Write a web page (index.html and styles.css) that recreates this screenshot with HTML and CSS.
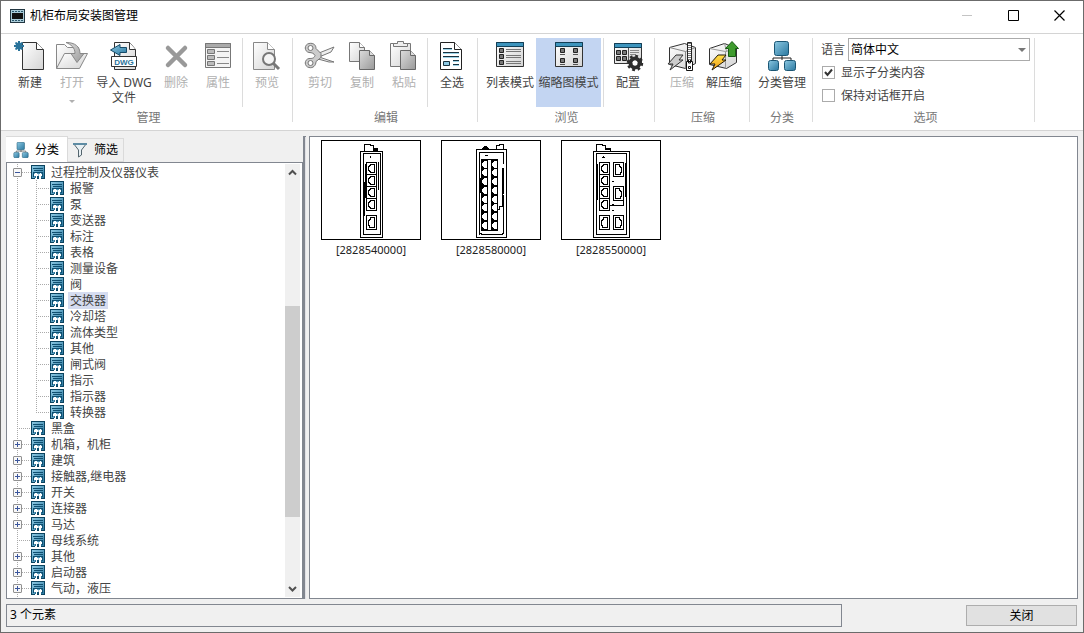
FILE: index.html
```html
<!DOCTYPE html>
<html lang="zh-CN">
<head>
<meta charset="utf-8">
<meta name="viewport" content="width=device-width, initial-scale=1">
<title>机柜布局安装图管理</title>
<link rel="stylesheet" href="styles.css">
</head>
<body>
<svg class="defs" aria-hidden="true">
  <defs>
    <linearGradient id="paper" x1="0" y1="0" x2="1" y2="1"><stop offset="0" stop-color="#fff"/><stop offset="1" stop-color="#d4d4d4"/></linearGradient>
    <linearGradient id="grey" x1="0" y1="0" x2="1" y2="1"><stop offset="0" stop-color="#dcdcdc"/><stop offset="1" stop-color="#999"/></linearGradient>
    <linearGradient id="blue" x1="0" y1="0" x2="1" y2="1"><stop offset="0" stop-color="#8cc8e2"/><stop offset="1" stop-color="#2a78a0"/></linearGradient>
    <linearGradient id="bolt" x1="0" y1="0" x2="0" y2="1"><stop offset="0" stop-color="#ffe14a"/><stop offset="1" stop-color="#f29a12"/></linearGradient>
    <symbol id="cat" viewBox="0 0 14 14">
      <path d="M0 0h14v14H0z" fill="#0b435f"/>
      <path d="M1 1h12v12H1z" fill="url(#blue)"/>
      <path d="M2 3h10v1H2zM3 5h9v1H3zM2 7h10v1H2zM2 8h1v4H2zM11 8h1v4h-1z" fill="#0f4f70"/>
      <path d="M4 8h2v1h1v2H6v3H4v-3H3V9h1zM9 8h1v1h1v2h-1v3H8v-3H7.500V9H9z" fill="#fff"/>
      <path d="M6 11h2v2H6z" fill="#0f4f70"/>
      <path d="M4 11h1v2H4zM10 11h1v2h-1z" fill="#2a6f92"/>
    </symbol>
    <symbol id="org" viewBox="0 0 28 30">
      <path d="M14 14v5M5 19v-2h18v2" fill="none" stroke="#222" stroke-width="1"/>
      <g fill="url(#blue)" stroke="#1b5674"><rect x="6.500" y=".5" width="14" height="14" rx="2"/><rect x=".5" y="19.500" width="10" height="10" rx="2"/><rect x="16.500" y="19.500" width="11" height="10" rx="2"/></g>
    </symbol>
    <symbol id="port" viewBox="0 0 11 13">
      <path d="M.5.500h10v12H.5z" fill="#fff" stroke="#000"/>
      <path d="M4.500 2.500h4v8h-4v-1h-1v-1h-1v-4h1v-1h1z" fill="none" stroke="#000"/>
    </symbol>
    <symbol id="port-b" viewBox="0 0 11 15">
      <path d="M.5.500h10v14H.5z" fill="#fff" stroke="#000"/>
      <path d="M4.500 2.500h4v10h-5v-2h-1v-5h1v-1h1z" fill="none" stroke="#000"/>
    </symbol>
    <symbol id="port-s" viewBox="0 0 7 9">
      <path d="M0 0h7v9H0z"/>
      <path d="M3 1h3v7H3V7H2V6H1V3h1V2h1z" fill="#fff"/>
    </symbol>
  </defs>
</svg>

<div class="window">
  <header class="titlebar">
    <svg class="app-icon" viewBox="0 0 15 14" aria-hidden="true"><path d="M0 0h15v14H0z" fill="#223641"/><path d="M1 1h13v12H1z" fill="#a9cbd8"/><path d="M2 4h11v6H2z" fill="#111"/><path d="M2 2h2v1H2zM5 2h2v1H5zM8 2h2v1H8zM11 2h2v1h-2zM2 11h2v1H2zM5 11h2v1H5zM8 11h2v1H8zM11 11h2v1h-2z" fill="#29566b"/></svg>
    <h1>机柜布局安装图管理</h1>
    <div class="win-buttons">
      <button aria-label="最小化" disabled><svg viewBox="0 0 11 11"><path d="M0 5.500h10" stroke="#c4c4c4"/></svg></button>
      <button aria-label="最大化"><svg viewBox="0 0 11 11"><path d="M.5.500h10v10H.5z" fill="none" stroke="#000"/></svg></button>
      <button aria-label="关闭窗口"><svg viewBox="0 0 11 11"><path d="M.5.500l10 10M10.500.5l-10 10" stroke="#000" stroke-width="1.200"/></svg></button>
    </div>
  </header>

  <div class="ribbon">
    <section class="group first">
      <div class="tools">
        <button class="tool"><svg viewBox="0 0 32 32"><path d="M8.500 2.500h14l7 7v20h-21z" fill="url(#paper)" stroke="#333"/><path d="M22.500 2.500v7h7" fill="#fff" stroke="#333"/><path d="M4 1h2v2l2-1 1 1-1 2h2v2H8l1 2-1 1-2-1v2H4V9l-2 1-1-1 1-2H0V5h2L1 3l1-1 2 1z" fill="#2a749b"/></svg>新建</button>
        <button class="tool" disabled><svg viewBox="0 0 32 32"><path d="M.5 28.500v-24h8l3 3h11v6" fill="url(#paper)" stroke="#888"/><path d="M.5 28.500l8-15h23l-8 15z" fill="url(#paper)" stroke="#888"/><path d="M10 2.500c9 0 14 4 14 11h4l-7 9-6-9h4c0-6-4-9-9-11z" fill="url(#grey)" stroke="#888"/></svg>打开<span class="caret"></span></button>
        <button class="tool dwg"><svg viewBox="0 0 32 32"><path d="M6.500 29.500v-27h15l6 7v20z" fill="url(#paper)" stroke="#333"/><path d="M21.500 2.500v7h6" fill="#fff" stroke="#333"/><path d="M12 4.500v3h6.500v5H12v3L2.500 10z" fill="url(#blue)" stroke="#164b68"/><path d="M3.500 16.500h25v10h-25z" fill="#fff" stroke="#333"/><text x="16" y="25" text-anchor="middle" class="dwg-mark">DWG</text></svg><span>导入 DWG<br>文件</span></button>
        <button class="tool" disabled><svg viewBox="0 0 32 32"><path d="M8 8l17 17M25 8L8 25" stroke="#999" stroke-width="4.500" stroke-linecap="round"/></svg>删除</button>
        <button class="tool" disabled><svg viewBox="0 0 32 32"><path d="M3.500 3.500h25v24h-25z" fill="#f4f4f4" stroke="#777"/><path d="M3.500 3.500h25v4h-25z" fill="#aaa" stroke="#777"/><g fill="#bbb" stroke="#777"><path d="M5.500 9.500h7v4h-7zM5.500 15.500h7v4h-7zM5.500 21.500h7v4h-7z"/></g><path d="M15 11.500h12M15 17.500h12M15 23.500h12" stroke="#888"/></svg>属性</button>
        <span class="sep"></span>
        <button class="tool" disabled><svg viewBox="0 0 32 32"><path d="M2.500 2.500h14l7 7v20h-21z" fill="url(#paper)" stroke="#888"/><path d="M16.500 2.500v7h7" fill="#fff" stroke="#888"/><path d="M22 23l6 6" stroke="#777" stroke-width="3"/><circle cx="18" cy="19" r="6" fill="#f4f4f4" stroke="#777" stroke-width="2"/></svg>预览</button>
      </div>
      <h2>管理</h2>
    </section>
    <section class="group">
      <div class="tools">
        <button class="tool" disabled><svg viewBox="0 0 32 32"><path d="M15 13l15-6-3 5-12 5zM15 17l15 5-5 0-11-3z" fill="#eee" stroke="#777"/><g fill="#ccc" stroke="#777"><path d="M5 3.500c5-1 7 2 7 5l5 5v4l-5 4c0 4-3 7-7 6-5-1-5-8 0-9 3 0 5 0 6-3-1-2-3-3-6-3-5-1-5-8 0-9z"/></g><circle cx="6.500" cy="8" r="2.500" fill="#fff" stroke="#777"/><circle cx="6.500" cy="23" r="2.500" fill="#fff" stroke="#777"/></svg>剪切</button>
        <button class="tool" disabled><svg viewBox="0 0 32 32"><path d="M3.500 2.500h10l5 5v14h-15z" fill="url(#paper)" stroke="#777"/><path d="M13.500 2.500v5h5" fill="#fff" stroke="#777"/><path d="M13.500 10.500h10l5 5v14h-15z" fill="url(#grey)" stroke="#666"/><path d="M23.500 10.500v5h5" fill="#ddd" stroke="#666"/></svg>复制</button>
        <button class="tool" disabled><svg viewBox="0 0 32 32"><path d="M2.500 3.500h20v23h-20z" fill="url(#paper)" stroke="#777"/><path d="M5.500 6.500v-3h4v-2h6v2h4v3z" fill="#eee" stroke="#777"/><path d="M12.500 10.500h10l5 5v14h-15z" fill="url(#grey)" stroke="#666"/><path d="M22.500 10.500v5h5" fill="#ddd" stroke="#666"/></svg>粘贴</button>
        <span class="sep"></span>
        <button class="tool"><svg viewBox="0 0 32 32"><path d="M4.500 2.500h14l7 7v20h-21z" fill="#fff" stroke="#222"/><path d="M18.500 2.500v7h7" fill="#fff" stroke="#222"/><path d="M7 8.500h9M7 12.500h16M7 16.500h16M17 20.500h6M17 24.500h6" stroke="#19323f"/><path d="M7 9.500h9M7 13.500h16M7 17.500h16M17 21.500h6M17 25.500h6" stroke="#9bd3e8"/><path d="M7.500 21.500h6v4h-6z" fill="#8cc8e2" stroke="#19323f"/></svg>全选</button>
      </div>
      <h2>编辑</h2>
    </section>
    <section class="group browse">
      <div class="tools">
        <button class="tool wide"><svg viewBox="0 0 32 32"><path d="M2.500 2.500h27v24h-27z" fill="url(#paper)" stroke="#333"/><path d="M2.500 2.500h27v4h-27z" fill="#3d94bd" stroke="#123f57"/><g fill="#777" stroke="#222"><path d="M5.500 8.500h4v4h-4zM5.500 14.500h4v4h-4zM5.500 20.500h4v4h-4z"/></g><path d="M12 9.500h15M12 11.500h15M12 15.500h15M12 17.500h15M12 21.500h15M12 23.500h15" stroke="#777"/></svg>列表模式</button>
        <button class="tool thumb-mode" aria-pressed="true"><svg viewBox="0 0 32 32"><path d="M2.500 2.500h27v24h-27z" fill="url(#paper)" stroke="#333"/><path d="M2.500 2.500h27v4h-27z" fill="#3d94bd" stroke="#123f57"/><g fill="#777" stroke="#222"><path d="M7.500 8.500h4v4h-4zM20.500 8.500h4v4h-4zM7.500 18.500h4v4h-4zM20.500 18.500h4v4h-4z"/></g><path d="M7 14.500h5M20 14.500h5M7 24.500h5M20 24.500h5" stroke="#555"/></svg>缩略图模式</button>
        <span class="sep snug"></span>
        <button class="tool"><svg viewBox="0 0 32 32"><path d="M2.500 3.500h27v20h-27z" fill="url(#paper)" stroke="#333"/><path d="M2.500 3.500h27v4h-27z" fill="#3d94bd" stroke="#123f57"/><g fill="#777" stroke="#222"><path d="M4.500 10.500h4v4h-4zM10.500 10.500h4v4h-4zM4.500 16.500h4v4h-4zM10.500 16.500h4v4h-4z"/></g><path d="M18 10.500h9M18 12.500h9M18 14.500h6" stroke="#888"/><path d="M16.500 8v15" stroke="#555"/><circle cx="23" cy="23" r="4.500" fill="none" stroke="#2e2e2e" stroke-width="4"/><circle cx="23" cy="23" r="7" fill="none" stroke="#2e2e2e" stroke-width="2.500" stroke-dasharray="2.750 2.750"/><circle cx="23" cy="23" r="2.500" fill="#fff"/></svg>配置</button>
      </div>
      <h2>浏览</h2>
    </section>
    <section class="group">
      <div class="tools">
        <button class="tool" disabled><svg viewBox="0 0 32 32"><path d="M3.500 7.500l15-4 11 4v16l-10 5-16-4z" fill="url(#paper)" stroke="#333"/><path d="M3.500 7.500l16 4 10-4M19.500 11.500v17" fill="none" stroke="#888"/><path d="M10 15h7l-4 5h4L4 30l3-6H2z" fill="#ccc" stroke="#333"/><path d="M21.500 2.500h4v19h-4z" fill="#fff" stroke="#222"/><path d="M23.500 3v18" stroke="#777" stroke-width="3" stroke-dasharray="1 1"/><path d="M20.500 21.500h6v9h-6z" fill="#fff" stroke="#111"/><path d="M22.500 26.500h2v2h-2zM22.500 20v3h2v-3" fill="none" stroke="#111"/></svg>压缩</button>
        <button class="tool"><svg viewBox="0 0 32 32"><path d="M1.500 8.500l15-5 12 5v14l-10 6-17-4z" fill="url(#paper)" stroke="#333"/><path d="M1.500 8.500l16 3 11-3M17.500 11.500v17M16.500 3.500l2 8" fill="none" stroke="#999"/><path d="M10 15h8l-4 5h4L4 30l3-6H2z" fill="url(#bolt)" stroke="#221a08"/><path d="M24 1.500l6.500 7h-3v8h-7v-8h-3z" fill="#3f9b2e" stroke="#175c12"/></svg>解压缩</button>
      </div>
      <h2>压缩</h2>
    </section>
    <section class="group">
      <div class="tools">
        <button class="tool wide"><svg viewBox="0 0 32 32"><use href="#org" x="2" y="1" width="28" height="30"/></svg>分类管理</button>
      </div>
      <h2>分类</h2>
    </section>
    <section class="group options">
      <div class="fields">
        <div class="field"><label for="lang">语言</label><select id="lang"><option>简体中文</option></select></div>
        <label class="check"><input type="checkbox" checked>显示子分类内容</label>
        <label class="check"><input type="checkbox">保持对话框开启</label>
      </div>
      <h2>选项</h2>
    </section>
  </div>

  <main class="workspace">
    <aside class="sidebar">
      <div class="tabs" role="tablist">
        <button class="tab" role="tab" aria-selected="true"><svg viewBox="0 0 16 16"><use href="#org" width="16" height="16"/></svg>分类</button>
        <button class="tab" role="tab" aria-selected="false"><svg viewBox="0 0 16 16"><path d="M1.500 1.500h13L9.500 8v5L6.500 15V8z" fill="#e8f0f4" stroke="#53646d"/><path d="M1 1h14v2H1z" fill="#5d8ba3"/></svg>筛选</button>
      </div>
      <div class="tree-box">
        <ul class="tree">
          <li><div class="row"><button class="toggle open" aria-label="折叠"></button><i></i><svg><use href="#cat"/></svg><span>过程控制及仪器仪表</span></div>
            <ul class="branch">
              <li class="row"><i></i><svg><use href="#cat"/></svg><span>报警</span></li>
              <li class="row"><i></i><svg><use href="#cat"/></svg><span>泵</span></li>
              <li class="row"><i></i><svg><use href="#cat"/></svg><span>变送器</span></li>
              <li class="row"><i></i><svg><use href="#cat"/></svg><span>标注</span></li>
              <li class="row"><i></i><svg><use href="#cat"/></svg><span>表格</span></li>
              <li class="row"><i></i><svg><use href="#cat"/></svg><span>测量设备</span></li>
              <li class="row"><i></i><svg><use href="#cat"/></svg><span>阀</span></li>
              <li class="row selected"><i></i><svg><use href="#cat"/></svg><span>交换器</span></li>
              <li class="row"><i></i><svg><use href="#cat"/></svg><span>冷却塔</span></li>
              <li class="row"><i></i><svg><use href="#cat"/></svg><span>流体类型</span></li>
              <li class="row"><i></i><svg><use href="#cat"/></svg><span>其他</span></li>
              <li class="row"><i></i><svg><use href="#cat"/></svg><span>闸式阀</span></li>
              <li class="row"><i></i><svg><use href="#cat"/></svg><span>指示</span></li>
              <li class="row"><i></i><svg><use href="#cat"/></svg><span>指示器</span></li>
              <li class="row"><i></i><svg><use href="#cat"/></svg><span>转换器</span></li>
            </ul>
          </li>
          <li class="row leaf"><i></i><svg><use href="#cat"/></svg><span>黑盒</span></li>
          <li class="row"><button class="toggle" aria-label="展开"></button><i></i><svg><use href="#cat"/></svg><span>机箱，机柜</span></li>
          <li class="row"><button class="toggle" aria-label="展开"></button><i></i><svg><use href="#cat"/></svg><span>建筑</span></li>
          <li class="row"><button class="toggle" aria-label="展开"></button><i></i><svg><use href="#cat"/></svg><span>接触器,继电器</span></li>
          <li class="row"><button class="toggle" aria-label="展开"></button><i></i><svg><use href="#cat"/></svg><span>开关</span></li>
          <li class="row"><button class="toggle" aria-label="展开"></button><i></i><svg><use href="#cat"/></svg><span>连接器</span></li>
          <li class="row"><button class="toggle" aria-label="展开"></button><i></i><svg><use href="#cat"/></svg><span>马达</span></li>
          <li class="row leaf"><i></i><svg><use href="#cat"/></svg><span>母线系统</span></li>
          <li class="row"><button class="toggle" aria-label="展开"></button><i></i><svg><use href="#cat"/></svg><span>其他</span></li>
          <li class="row"><button class="toggle" aria-label="展开"></button><i></i><svg><use href="#cat"/></svg><span>启动器</span></li>
          <li class="row"><button class="toggle" aria-label="展开"></button><i></i><svg><use href="#cat"/></svg><span>气动，液压</span></li>
        </ul>
        <div class="scrollbar" aria-hidden="true">
          <svg viewBox="0 0 15 17"><path d="M4 10.500l3.500-3.500 3.500 3.500" fill="none" stroke="#505050" stroke-width="2"/></svg>
          <div class="track"><div class="before"></div><div class="thumb"></div><div class="after"></div></div>
          <svg viewBox="0 0 15 17"><path d="M4 7l3.500 3.500L11 7" fill="none" stroke="#505050" stroke-width="2"/></svg>
        </div>
      </div>
    </aside>
    <div class="splitter"></div>
    <section class="gallery">
      <figure>
        <svg viewBox="0 0 100 100" shape-rendering="crispEdges" role="img" aria-label="交换机 2828540000">
          <g fill="none" stroke="#000"><path d="M39.500 11.500h22v86h-22zM42.500 13.500h17v81h-17zM43.500 11v-7h5l1 1h3v4h3v2M52 8.500h4v2h-4M49.500 16v2M57.500 22v28M44.500 24v34M43.500 42v34"/></g>
          <use href="#port" x="45" y="22" width="11" height="13"/><use href="#port" x="45" y="34" width="11" height="13"/><use href="#port" x="45" y="46" width="11" height="13"/><use href="#port" x="45" y="58" width="11" height="13"/><use href="#port-b" x="45" y="75" width="11" height="15"/>
        </svg>
        <figcaption>[2828540000]</figcaption>
      </figure>
      <figure>
        <svg viewBox="0 0 100 100" shape-rendering="crispEdges" role="img" aria-label="交换机 2828580000">
          <path d="M41 9V8h1V7h1V6h3v1h1v1h1v1z"/>
          <g fill="none" stroke="#000"><path d="M35.500 9.500h30v88h-30zM38.500 94.500v-82h23M62.500 12v12M38 93.500h2v1h21v-1h1v-39M62.500 28v26M61.500 28v38h-3v3h-2M55.500 9v-4h3v-1h4v5M44 15.500h3M40.500 19.500h16v71h-16zM39.500 38v15"/></g>
          <use href="#port-s" x="40" y="20" width="7" height="9"/><use href="#port-s" x="40" y="28" width="7" height="9"/><use href="#port-s" x="40" y="37" width="7" height="9"/><use href="#port-s" x="40" y="46" width="7" height="9"/><use href="#port-s" x="40" y="55" width="7" height="9"/><use href="#port-s" x="40" y="63" width="7" height="9"/><use href="#port-s" x="40" y="72" width="7" height="9"/><use href="#port-s" x="40" y="81" width="7" height="9"/>
          <use href="#port-s" x="50" y="20" width="7" height="9"/><use href="#port-s" x="50" y="28" width="7" height="9"/><use href="#port-s" x="50" y="37" width="7" height="9"/><use href="#port-s" x="50" y="46" width="7" height="9"/><use href="#port-s" x="50" y="55" width="7" height="9"/><use href="#port-s" x="50" y="63" width="7" height="9"/><use href="#port-s" x="50" y="72" width="7" height="9"/><use href="#port-s" x="50" y="81" width="7" height="9"/>
        </svg>
        <figcaption>[2828580000]</figcaption>
      </figure>
      <figure>
        <svg viewBox="0 0 100 100" shape-rendering="crispEdges" role="img" aria-label="交换机 2828550000">
          <g fill="none" stroke="#000"><path d="M32.500 11.500h36v86h-36zM35.500 13.500h30v81h-30zM35.500 11v-7h5l1 1h3v4h5v2M44 8.500h5v2M41 17.500h3M42.500 16v2M36.500 24v36M64.500 23v34M51 41.500h2M51 64.500h2M51 70.500h2M48 65.500h14v-5"/></g>
          <use href="#port" x="38" y="22" width="11" height="13"/><use href="#port" x="38" y="34" width="11" height="13"/><use href="#port" x="38" y="46" width="11" height="13"/><use href="#port" x="38" y="58" width="11" height="13"/><use href="#port-b" x="38" y="75" width="11" height="15"/>
          <g transform="translate(115 0) scale(-1 1)"><use href="#port-b" x="52" y="22" width="11" height="15"/><use href="#port-b" x="52" y="46" width="11" height="15"/><use href="#port-b" x="52" y="75" width="11" height="15"/></g>
        </svg>
        <figcaption>[2828550000]</figcaption>
      </figure>
    </section>
  </main>

  <footer class="statusbar">
    <output>3 个元素</output>
    <button class="close">关闭</button>
  </footer>
</div>
</body>
</html>
```
FILE: styles.css
```css
* { box-sizing: border-box; }

body {
  margin: 0;
  font: 12px/16px "Noto Sans", "Noto Sans CJK SC", sans-serif;
  color: #444;
}

button, select, input { font: inherit; color: inherit; margin: 0; }
button { padding: 0; border: 0; background: none; }
h1, h2 { margin: 0; font: inherit; }
ul { list-style: none; margin: 0; padding: 0; }
svg { display: block; flex: none; }
.defs { position: absolute; width: 0; height: 0; }

.window {
  display: flex;
  flex-direction: column;
  min-height: 100vh;
  border: 1px solid #6b6b6b;
  background: #f0f0f0;
}

/* Title bar */
.titlebar {
  display: flex;
  align-items: center;
  gap: 5px;
  height: 33px;
  padding: 0 1px 3px 9px;
  background: #fff;
  border-bottom: 1px solid #d4d4d4;
}
.app-icon { width: 15px; height: 14px; }
.titlebar h1 { flex: 1; color: #000; }
.win-buttons { display: flex; }
.win-buttons button { display: grid; place-items: center; width: 46px; height: 29px; }
.win-buttons svg { width: 11px; height: 11px; }

/* Ribbon */
.ribbon {
  display: flex;
  height: 97px;
  padding: 4px 0 8px;
  background: #fff;
  border-bottom: 1px solid #d4d4d4;
}
.group {
  display: flex;
  flex-direction: column;
  padding: 0 4px 0 6px;
  border-right: 1px solid #dcdcdc;
}
.group.first { padding-left: 8px; }
.group h2 { text-align: center; color: #777; line-height: 16px; padding-top: 3px; }
.tools { display: flex; height: 70px; }
.tool {
  display: flex;
  flex-direction: column;
  align-items: center;
  width: 42px;
  height: 69px;
  padding-top: 2px;
  line-height: 15px;
  white-space: nowrap;
}
.tool svg { width: 32px; height: 32px; margin-bottom: 3px; }
.tool:disabled { color: #b0b0b0; }
.tool.dwg { width: 62px; }
.tool.wide { width: 52px; }
.tool.thumb-mode { width: 65px; }
.tool[aria-pressed="true"] { background: #c3d5f2; }
.dwg-mark { font: bold 8px "Liberation Sans", sans-serif; fill: #2a749b; }
.caret { margin-top: 10px; border: 3px solid transparent; border-top-color: #b0b0b0; border-bottom: 0; }
.sep { width: 1px; margin: 0 3px 0 2px; background: #dcdcdc; }
.first .sep { margin-left: 3px; }
.browse { padding-right: 5px; }

.options { width: 222px; padding-left: 8px; }
.fields { height: 70px; }
.field { display: flex; align-items: center; gap: 3px; }
.field select {
  flex: 1;
  height: 23px;
  padding: 0 2px;
  border: 1px solid #ababab;
  border-radius: 0;
  color: #000;
  appearance: none;
  background: #fff url("data:image/svg+xml,%3Csvg xmlns='http://www.w3.org/2000/svg' width='8' height='4'%3E%3Cpath d='M0 0h8L4 4z' fill='%23777'/%3E%3C/svg%3E") no-repeat right 3px center;
}
.check { display: flex; align-items: center; gap: 6px; height: 23px; padding-left: 1px; }
.check input {
  width: 13px;
  height: 13px;
  border: 1px solid #ababab;
  appearance: none;
  background: #fff no-repeat center;
}
.check input:checked {
  background-image: url("data:image/svg+xml,%3Csvg xmlns='http://www.w3.org/2000/svg' width='9' height='9'%3E%3Cpath d='M1 4l2.500 3L8 1.500' fill='none' stroke='%23333' stroke-width='2'/%3E%3C/svg%3E");
}

/* Workspace */
.workspace { flex: 1; display: flex; padding: 5px 5px 0; }
.sidebar { flex: none; width: 297px; display: flex; flex-direction: column; }
.tabs { display: flex; align-items: flex-end; height: 26px; }
.tab {
  display: flex;
  align-items: center;
  gap: 6px;
  width: 56px;
  height: 24px;
  padding-left: 4px;
  border: 1px solid #dadada;
  border-left: 0;
  color: #000;
}
.tab svg { width: 16px; height: 16px; }
.tab[aria-selected="true"] { width: 62px; height: 26px; padding-left: 7px; background: #fff; border-bottom: 0; }

.tree-box {
  flex: 1;
  display: flex;
  border: 1px solid #828790;
  background: #fff;
  padding: 1px 2px 1px 0;
}
.tree, .branch {
  --dots: repeating-linear-gradient(180deg, #aaa 0 1px, transparent 1px 2px);
}
.tree { flex: 1; background: var(--dots) 10px 0 / 1px 100% no-repeat; }
.branch { background: var(--dots) 29px 0 / 1px calc(100% - 8px) no-repeat; }
.row { display: flex; align-items: center; height: 16px; padding-left: 6px; }
.row.leaf { padding-left: 10px; }
.branch .row { padding-left: 29px; }
.row i { width: 9px; height: 1px; background: repeating-linear-gradient(90deg, #aaa 0 1px, transparent 1px 2px); }
.row.leaf i, .branch .row i { width: 14px; }
.row svg { width: 14px; height: 14px; margin-right: 4px; }
.row span { padding: 1px 2px 0; line-height: 16px; }
.row.selected span { background: #d5dcf0; }
.toggle {
  width: 9px;
  height: 9px;
  border: 1px solid #919191;
  border-radius: 1px;
  background:
    linear-gradient(#3b569c, #3b569c) center / 5px 1px no-repeat,
    linear-gradient(#3b569c, #3b569c) center / 1px 5px no-repeat,
    #f8f8f8;
}
.toggle.open { background: linear-gradient(#3b569c, #3b569c) center / 5px 1px no-repeat, #f8f8f8; }

.scrollbar { width: 15px; display: flex; flex-direction: column; background: #f0f0f0; }
.scrollbar svg { width: 15px; height: 17px; }
.track { flex: 1; display: flex; flex-direction: column; }
.track .before { flex: 125; }
.track .thumb { flex: 211; background: #cdcdcd; }
.track .after { flex: 63; }

.splitter { flex: none; width: 3px; margin-right: 3px; border: solid #828790; border-width: 1px 0 0 2px; background: #e0e0e4; }

.gallery {
  flex: 1;
  display: flex;
  flex-wrap: wrap;
  align-content: flex-start;
  gap: 20px;
  padding: 3px 11px;
  border: 1px solid #828790;
  background: #fff;
}
.gallery figure { width: 100px; margin: 0; }
.gallery figure svg { width: 100px; height: 100px; outline: 1px solid #000; outline-offset: -1px; }
.gallery figcaption { padding-top: 2px; font-size: 11px; line-height: 16px; text-align: center; color: #222; }

/* Status bar */
.statusbar { display: flex; align-items: center; justify-content: space-between; padding: 5px 6px 5px 5px; }
.statusbar output {
  flex: 0 1 836px;
  height: 23px;
  padding: 0 3px;
  border: 1px solid #828790;
  line-height: 20px;
  color: #000;
}
.close { width: 111px; height: 21px; border: 1px solid #adadad; background: #e1e1e1; color: #000; }
```
